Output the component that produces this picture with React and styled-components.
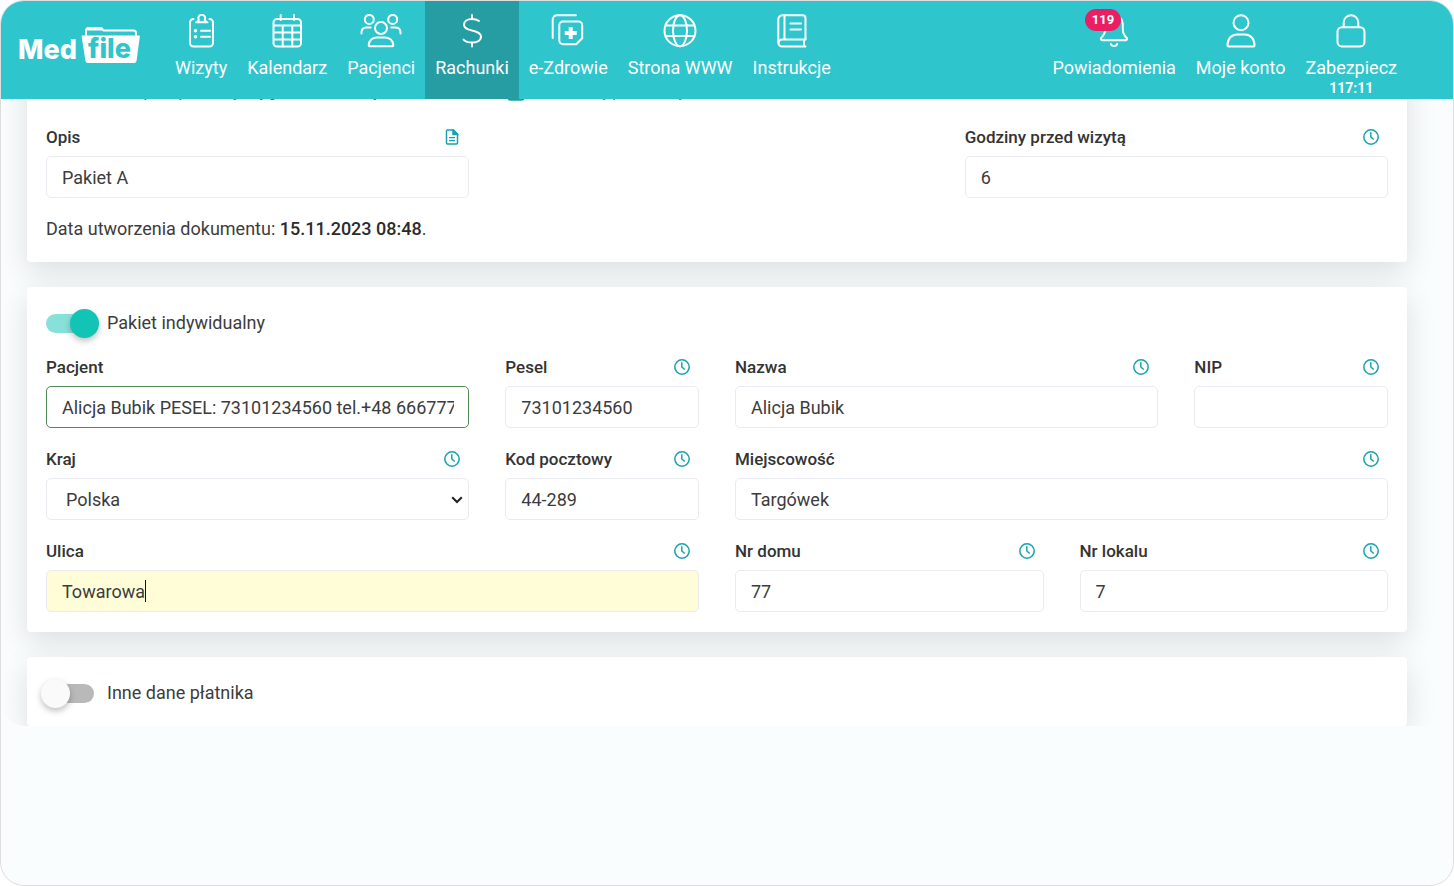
import React, { useState } from "react";
import styled, { createGlobalStyle, css } from "styled-components";

const navItems = [
  { label: "Wizyty", icon: "clipboard" },
  { label: "Kalendarz", icon: "calendar" },
  { label: "Pacjenci", icon: "people" },
  { label: "Rachunki", icon: "dollar", active: true },
  { label: "e-Zdrowie", icon: "health" },
  { label: "Strona WWW", icon: "globe" },
  { label: "Instrukcje", icon: "book" },
];

const userItems = [
  { label: "Powiadomienia", icon: "bell", badge: "119" },
  { label: "Moje konto", icon: "user" },
  { label: "Zabezpiecz", icon: "lock", timer: "117:11" },
];

const icons = {
  clipboard: (
    <>
      <path d="M9.500 5A3.500 3.500 0 0 0 6 8.500V29a3.500 3.500 0 0 0 3.500 3.500h16A3.500 3.500 0 0 0 29 29V8.500A3.500 3.500 0 0 0 25.500 5" />
      <path d="M12 8.200h11.500M13.500 8c.2-1.200 1-1.500 1.300-2.200a3.400 3.400 0 1 1 5.900 0c.3.700 1.100 1 1.300 2.200" />
      <path d="M17 16.700h9M17 22.700h9" />
      <circle cx="11.500" cy="16.700" r="0.800" />
      <circle cx="11.500" cy="22.700" r="0.800" />
    </>
  ),
  calendar: (
    <>
      <rect x="3.500" y="5" width="27.500" height="27.500" rx="3.500" />
      <path d="M10.700 1v5M24 1v5M4 11.500h27M4 18.400h27M4 25.500h27M12.700 11.500v21M22.300 11.500v21" />
    </>
  ),
  people: (
    <>
      <circle cx="21" cy="14" r="6" />
      <circle cx="9.300" cy="5.400" r="4.500" />
      <circle cx="32.700" cy="5.400" r="4.500" />
      <path d="M9.500 32.200h23c.6 0 .8-.4.800-1 0-5-4-7.700-8.300-7.700h-8c-4.300 0-8.300 2.700-8.300 7.700 0 .6.200 1 .8 1z" />
      <path d="M1.500 19.500v-1.200c0-3 2-4.800 4.700-4.800h4.500M40.500 19.500v-1.200c0-3-2-4.800-4.700-4.800h-4.500" />
    </>
  ),
  dollar: (
    <path d="M17 1v4M17 28.500v4M24 7C22 5.500 19.700 5 17 5c-4.500 0-8 2-8 5.700 0 3.500 3 4.700 8 5.700s9 2.300 9 6.200c0 4-4 6-9 6-3.500 0-6.500-1-8.500-3" />
  ),
  health: (
    <>
      <path d="M1.700 24V5.500A4.200 4.200 0 0 1 6 1.300h19" />
      <path d="M12 7.500h15.500a3.700 3.700 0 0 1 3.700 3.700v13l-6 6H12a3.700 3.700 0 0 1-3.700-3.700V11.200A3.700 3.700 0 0 1 12 7.500z" />
      <path d="M19.700 13v12M13.700 19h12" strokeWidth="4" strokeLinecap="butt" />
    </>
  ),
  globe: (
    <>
      <circle cx="17" cy="16.700" r="15.500" />
      <ellipse cx="17" cy="16.700" rx="7" ry="15.500" />
      <path d="M2.500 11.500h29M2.500 21.900h29" />
    </>
  ),
  book: (
    <>
      <path d="M30.500 25.500V4.300a3 3 0 0 0-3-3h-20A4.500 4.500 0 0 0 3.300 5.500v23" />
      <path d="M9.500 1.300v24M30.500 25.500H7a3.500 3.500 0 0 0 0 7h23.500M29 25.500v7M15.500 9.500h10.500M15.500 15.500h10.500" />
    </>
  ),
  bell: (
    <>
      <path d="M16.700 1.500c-5 0-8.500 3.700-8.500 8.500v5.500c0 3.500-1.700 6-4 8.500-.9 1 0 2.200 1.200 2.200h23.200c1.200 0 2-1.200 1.200-2.200-2.600-2.500-4-5-4-8.500V10c0-4.800-4-8.500-9.100-8.500z" />
      <path d="M13.800 30c.9 2.800 5.500 2.800 6.400 0" />
    </>
  ),
  user: (
    <>
      <circle cx="17" cy="8.700" r="7.500" />
      <path d="M4.500 32.400h25c.7 0 1-.4 1-1 0-7-4.500-11-9.500-11h-8c-5 0-9.500 4-9.500 11 0 .6.300 1 1 1z" />
    </>
  ),
  lock: (
    <>
      <rect x="3.500" y="13.200" width="27" height="19.200" rx="4.500" />
      <path d="M9.700 13V8.500a7.300 7.300 0 0 1 14.600 0V13" />
    </>
  ),
};

function NavIcon({ name }) {
  const width = name === "people" ? 42 : 34;
  return (
    <IconSvg width={width} height="34" viewBox={`0 0 ${width} 34`} aria-hidden="true">
      {icons[name]}
    </IconSvg>
  );
}

function NavEntry({ item }) {
  return (
    <NavLink href="#" $active={item.active}>
      <IconBox>
        <NavIcon name={item.icon} />
        {item.badge && <Badge>{item.badge}</Badge>}
      </IconBox>
      <span>{item.label}</span>
      {item.timer && <Timer>{item.timer}</Timer>}
    </NavLink>
  );
}

function Logo() {
  return (
    <LogoLink href="#" aria-label="MedFile">
      <LogoName>Med</LogoName>
      <svg width="60" height="40" viewBox="0 0 60 40">
        <path
          d="M5 12V6.500a2.500 2.500 0 0 1 2.500-2.500h13l2 2.500h30a2.500 2.500 0 0 1 2.500 2.500v4"
          fill="none"
          stroke="#fff"
          strokeWidth="2"
        />
        <path d="M5.500 5.500a3 3 0 0 1 3-2.500H20l2 3.500H5.500z" fill="#fff" />
        <path
          d="M1.500 11.500H58q.9 0 .8 1.200l-3.200 24q-.3 2.300-2.600 2.300H7q-2.300 0-2.600-2.300l-3.700-24q-.2-1.200.8-1.200z"
          fill="#fff"
        />
        <FolderText x="7" y="34">
          file
        </FolderText>
      </svg>
    </LogoLink>
  );
}

function ClockIcon() {
  return (
    <svg width="16" height="16" viewBox="0 0 16 16" fill="none" stroke="currentColor" strokeWidth="1.500">
      <circle cx="8" cy="8" r="7.200" />
      <path d="M7.800 3.300V8l3 2.500" />
    </svg>
  );
}

function DocIcon({ size = 16 }) {
  return (
    <svg width={size} height={size} viewBox="0 0 16 16" fill="none" stroke="currentColor" strokeWidth="1.500">
      <path d="M3.500 1h6l4 4v9a1 1 0 0 1-1 1h-9a1 1 0 0 1-1-1V2a1 1 0 0 1 1-1z" />
      <path d="M9 1v4.500h4.500L9 1z" fill="currentColor" />
      <path d="M5 8.700h6M5 11.700h6" strokeWidth="1.200" />
    </svg>
  );
}

function Field({ id, label, value, span, start, icon = "clock", state, caret }) {
  const [text, setText] = useState(value);
  return (
    <FieldBox $span={span} $start={start}>
      <FieldHead>
        <FieldLabel htmlFor={id}>{label}</FieldLabel>
        {icon && (
          <HintButton type="button" aria-label={`Historia: ${label}`}>
            {icon === "doc" ? <DocIcon /> : <ClockIcon />}
          </HintButton>
        )}
      </FieldHead>
      <InputWrap>
        <Input id={id} type="text" value={text} $state={state} onChange={(e) => setText(e.target.value)} />
        {caret && <Caret />}
      </InputWrap>
    </FieldBox>
  );
}

function Toggle({ label, on }) {
  const [checked, setChecked] = useState(on);
  return (
    <ToggleLabel>
      <Switch type="checkbox" checked={checked} onChange={(e) => setChecked(e.target.checked)} />
      {label}
    </ToggleLabel>
  );
}

function App() {
  return (
    <>
      <GlobalStyle />
      <Frame>
        <Header>
          <Logo />
          <Nav>
            {navItems.map((item) => (
              <NavEntry key={item.label} item={item} />
            ))}
          </Nav>
          <UserNav>
            {userItems.map((item) => (
              <NavEntry key={item.label} item={item} />
            ))}
          </UserNav>
        </Header>

        <Main>
          <Card>
            <Grid>
              <Note>Ustala czas po opłacony wygasanie każdy</Note>
              <NoteLink href="#">
                <DocIcon size={22} />
                Okaże się pomocny
              </NoteLink>
              <Field id="opis" label="Opis" value="Pakiet A" span={4} icon="doc" />
              <Field id="godziny" label="Godziny przed wizytą" value="6" span={4} start={9} />
            </Grid>
            <Created>
              Data utworzenia dokumentu: <b>15.11.2023 08:48</b>.
            </Created>
          </Card>

          <Card>
            <Toggle label="Pakiet indywidualny" on={true} />
            <Grid>
              <Field
                id="pacjent"
                label="Pacjent"
                value="Alicja Bubik PESEL: 73101234560 tel.+48 666777888"
                span={4}
                icon={null}
                state="valid"
              />
              <Field id="pesel" label="Pesel" value="73101234560" span={2} />
              <Field id="nazwa" label="Nazwa" value="Alicja Bubik" span={4} />
              <Field id="nip" label="NIP" value="" span={2} />

              <FieldBox $span={4}>
                <FieldHead>
                  <FieldLabel htmlFor="kraj">Kraj</FieldLabel>
                  <HintButton type="button" aria-label="Historia: Kraj">
                    <ClockIcon />
                  </HintButton>
                </FieldHead>
                <InputWrap>
                  <Select id="kraj" defaultValue="Polska">
                    <option>Polska</option>
                  </Select>
                  <Chevron width="12" height="8" viewBox="0 0 12 8">
                    <path d="M1.200 1.200L6 6l4.800-4.800" />
                  </Chevron>
                </InputWrap>
              </FieldBox>
              <Field id="kod" label="Kod pocztowy" value="44-289" span={2} />
              <Field id="miejscowosc" label="Miejscowość" value="Targówek" span={6} />

              <Field id="ulica" label="Ulica" value="Towarowa" span={6} state="filled" caret />
              <Field id="dom" label="Nr domu" value="77" span={3} />
              <Field id="lokal" label="Nr lokalu" value="7" span={3} />
            </Grid>
          </Card>

          <Card $last>
            <Toggle label="Inne dane płatnika" on={false} />
          </Card>
        </Main>
      </Frame>
    </>
  );
}

export default App;

const GlobalStyle = createGlobalStyle`
  * {
    box-sizing: border-box;
  }
  body {
    margin: 0;
    background: #fff;
    color: #3c3c3c;
    font-family: Roboto, "Liberation Sans", sans-serif;
    font-size: 18px;
    line-height: 26px;
  }
`;

const Frame = styled.div`
  min-height: 100vh;
  border: 1px solid #dedede;
  border-radius: 24px;
  background: #f9fdfe;
  overflow: hidden;
`;

const Header = styled.header`
  position: relative;
  z-index: 2;
  display: flex;
  height: 98px;
  padding: 0 46px 0 17px;
  background: #2fc5cd;
`;

const LogoLink = styled.a`
  display: flex;
  width: 123px;
  margin-right: 24px;
  padding-top: 23px;
  justify-content: space-between;
  text-decoration: none;
`;

const LogoName = styled.span`
  color: #fff;
  font-family: Inter, "Open Sans", sans-serif;
  font-size: 27px;
  font-weight: 800;
  line-height: 52px;
`;

const FolderText = styled.text`
  font-family: Inter, "Open Sans", sans-serif;
  font-size: 27px;
  font-weight: 800;
  fill: #2fc5cd;
`;

const Nav = styled.nav`
  display: flex;
`;

const UserNav = styled(Nav)`
  margin-left: auto;
`;

const NavLink = styled.a`
  display: flex;
  flex-direction: column;
  align-items: center;
  padding: 13px 10px 0;
  color: #fff;
  line-height: 20px;
  text-decoration: none;
  white-space: nowrap;
  background: ${(props) => (props.$active ? "#269da3" : "transparent")};
  &:hover {
    background: #269da3;
  }
`;

const IconBox = styled.span`
  position: relative;
  height: 34px;
  margin-bottom: 10px;
`;

const IconSvg = styled.svg`
  display: block;
  fill: none;
  stroke: #fff;
  stroke-width: 2;
  stroke-linecap: round;
  stroke-linejoin: round;
`;

const Badge = styled.span`
  position: absolute;
  top: -5px;
  right: 10px;
  padding: 0 7px;
  border-radius: 11px;
  background: #e91e63;
  font-size: 13px;
  font-weight: 700;
  line-height: 22px;
`;

const Timer = styled.span`
  margin-top: 2px;
  font-size: 14px;
  font-weight: 700;
  line-height: 16px;
`;

const Main = styled.main`
  display: flex;
  flex-direction: column;
  gap: 25px;
  margin-top: -42px;
  padding: 0 46px 0 26px;
  border-radius: 0 0 24px 24px;
  overflow: hidden;
`;

const Card = styled.section`
  padding: 20px 19px ${(props) => (props.$last ? "17px" : "20px")};
  border-radius: 4px;
  background: #fff;
  box-shadow: 0 10px 30px rgba(0, 0, 0, 0.12);
`;

const Grid = styled.div`
  display: grid;
  grid-template-columns: repeat(12, minmax(0, 1fr));
  gap: 19px 36px;
`;

const Note = styled.div`
  grid-column: span 4;
  margin-bottom: 3px;
  color: #666;
  white-space: nowrap;
`;

const NoteLink = styled.a`
  display: flex;
  grid-column: span 8;
  align-items: center;
  gap: 3px;
  margin-bottom: 3px;
  color: #17a2b0;
  text-decoration: none;
`;

const FieldBox = styled.div`
  grid-column: ${(props) => props.$start || "auto"} / span ${(props) => props.$span};
`;

const FieldHead = styled.div`
  display: flex;
  align-items: center;
  justify-content: space-between;
  height: 24px;
  margin-bottom: 7px;
  padding-right: 9px;
`;

const FieldLabel = styled.label`
  font-size: 17px;
  font-weight: 500;
  line-height: 24px;
  color: #333;
  white-space: nowrap;
`;

const HintButton = styled.button`
  display: flex;
  padding: 0;
  border: 0;
  background: none;
  color: #17a2b0;
  cursor: pointer;
`;

const InputWrap = styled.div`
  position: relative;
`;

const control = css`
  display: block;
  width: 100%;
  height: 42px;
  border: 1px solid #e9ebf0;
  border-radius: 5px;
  background: #fff;
  color: #3c3c3c;
  font-family: inherit;
  font-size: 18px;
  outline: none;
`;

const Input = styled.input`
  ${control}
  padding: 0 14px 0 15px;
  ${(props) => props.$state === "valid" && "border-color: #4f8a55;"}
  ${(props) => props.$state === "filled" && "background: #fefdd8;"}
`;

const Select = styled.select`
  ${control}
  appearance: none;
  padding: 0 30px 0 19px;
`;

const Chevron = styled.svg`
  position: absolute;
  top: 18px;
  right: 6px;
  fill: none;
  stroke: #222;
  stroke-width: 2;
  pointer-events: none;
`;

const Caret = styled.span`
  position: absolute;
  top: 10px;
  left: 99px;
  width: 1px;
  height: 22px;
  background: #111;
`;

const Created = styled.div`
  margin-top: 18px;

  b {
    font-weight: 500;
    color: #2b2b2b;
  }
`;

const ToggleLabel = styled.label`
  display: flex;
  align-items: center;
  gap: 13px;
  width: fit-content;
  height: 32px;

  & + ${Grid} {
    margin-top: 16px;
  }
`;

const Switch = styled.input`
  appearance: none;
  position: relative;
  width: 48px;
  height: 19px;
  margin: 0;
  border-radius: 10px;
  background: #b9b9b9;
  cursor: pointer;

  &::before {
    content: "";
    position: absolute;
    top: -5px;
    left: -5px;
    width: 29px;
    height: 29px;
    border-radius: 50%;
    background: #fafafa;
    box-shadow: 0 3px 6px rgba(0, 0, 0, 0.25);
  }

  &:checked {
    background: #88e1d9;
  }

  &:checked::before {
    left: 24px;
    background: #12c4b5;
  }
`;
